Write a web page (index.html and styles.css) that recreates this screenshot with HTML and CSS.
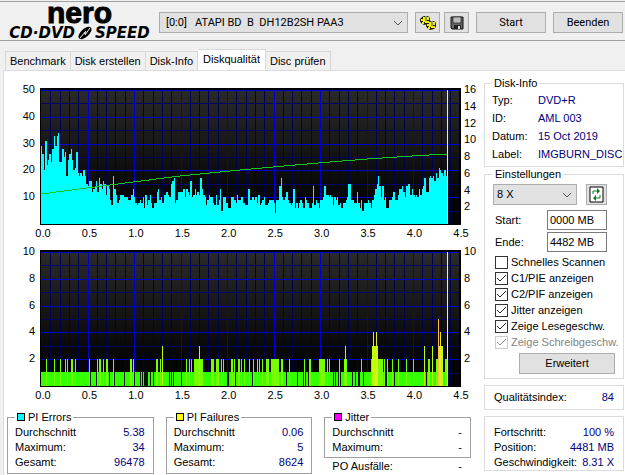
FILE: index.html
```html
<!DOCTYPE html>
<html lang="de">
<head>
  <meta charset="UTF-8">
  <meta name="viewport" content="width=device-width, initial-scale=1">
  <title>Nero CD-DVD Speed</title>
  <link rel="stylesheet" href="styles.css">
</head>
<body>

  <header class="toolbar">
    <div class="logo">
      <div class="logo-top">nero</div>
      <div class="logo-bottom">
        <span>CD·DVD</span>
        <svg width="20" height="14" viewBox="0 0 20 14">
          <ellipse cx="10" cy="7" rx="8" ry="4" transform="rotate(-42 10 7)"/>
          <path d="M5 12L11 5M10 9l5-7" stroke="#f0f0f0" stroke-width="1" fill="none"/>
          <circle cx="10" cy="7" r="1" fill="#f0f0f0"/>
        </svg>
        <span>SPEED</span>
      </div>
    </div>
    <select class="drive" aria-label="Laufwerk">
      <option>[0:0] &nbsp; ATAPI BD &nbsp;B &nbsp;DH12B2SH PAA3</option>
    </select>
    <div class="icons">
      <button class="icon-btn" aria-label="Optionen">
        <svg width="18" height="18" viewBox="0 0 18 18">
          <path d="M1 5l2-2 2-1h4l2 2v4l-2 2-4 1-3-2-1-2z" fill="#222200"/>
          <path d="M7 10l2-2 2-1h4l2 2v4l-2 2-4 1-3-2-1-2z" fill="#222200"/>
          <path d="M2 5h2V3h2v2H4v2H2zM8 3h2v3H8zM3 8h2v2H3zM6 7h4v2H6zM4 5h2v3H4z" fill="#f0f000"/>
          <path d="M8 10h2V8h2v2h-2v2H8zM14 8h2v3h-2zM9 13h2v2H9zM12 12h4v2h-4zM10 10h2v3h-2z" fill="#f0f000"/>
          <path d="M7 2v5M13 7v5" stroke="#fff" stroke-width="1"/>
        </svg>
      </button>
      <button class="icon-btn" aria-label="Speichern">
        <svg width="14" height="14" viewBox="0 0 14 14">
          <path d="M1 1h12v12H2l-1-1z" fill="#666" stroke="#111"/>
          <path d="M3 1h8v6H3z" fill="#ddd" stroke="#333"/>
          <path d="M4 3h6M4 5h6" stroke="#999"/>
          <path d="M4 9h7v4H4z" fill="#222"/>
          <path d="M8 10h2v3H8z" fill="#ddd"/>
        </svg>
      </button>
    </div>
    <button class="btn tool-btn">Start</button>
    <button class="btn tool-btn">Beenden</button>
  </header>

  <nav class="tabs">
    <button>Benchmark</button>
    <button>Disk erstellen</button>
    <button>Disk-Info</button>
    <button class="active">Diskqualität</button>
    <button>Disc prüfen</button>
  </nav>

  <main class="page">
    <div class="left">

      <div class="chart">
        <div class="y-axis"><span>50</span><span>40</span><span>30</span><span>20</span><span>10</span><span></span></div>
        <svg class="plot" id="pie" viewBox="0 0 421 137" preserveAspectRatio="none"></svg>
        <div class="y-axis right-axis"><span>16</span><span>14</span><span>12</span><span>10</span><span>8</span><span>6</span><span>4</span><span>2</span><span></span></div>
        <div class="x-axis"><span>0.0</span><span>0.5</span><span>1.0</span><span>1.5</span><span>2.0</span><span>2.5</span><span>3.0</span><span>3.5</span><span>4.0</span><span>4.5</span></div>
      </div>

      <div class="chart">
        <div class="y-axis"><span>10</span><span>8</span><span>6</span><span>4</span><span>2</span><span></span></div>
        <svg class="plot" id="pif" viewBox="0 0 421 137" preserveAspectRatio="none"></svg>
        <div class="y-axis right-axis"><span>10</span><span>8</span><span>6</span><span>4</span><span>2</span><span></span></div>
        <div class="x-axis"><span>0.0</span><span>0.5</span><span>1.0</span><span>1.5</span><span>2.0</span><span>2.5</span><span>3.0</span><span>3.5</span><span>4.0</span><span>4.5</span></div>
      </div>

      <div class="stats">
        <fieldset class="stat">
          <legend><i class="swatch cyan"></i>PI Errors</legend>
          <div class="row"><span>Durchschnitt</span><b>5.38</b></div>
          <div class="row"><span>Maximum:</span><b>34</b></div>
          <div class="row"><span>Gesamt:</span><b>96478</b></div>
        </fieldset>
        <fieldset class="stat">
          <legend><i class="swatch yellow"></i>PI Failures</legend>
          <div class="row"><span>Durchschnitt</span><b>0.06</b></div>
          <div class="row"><span>Maximum:</span><b>5</b></div>
          <div class="row"><span>Gesamt:</span><b>8624</b></div>
        </fieldset>
        <div class="jitter">
          <fieldset class="stat">
            <legend><i class="swatch magenta"></i>Jitter</legend>
            <div class="row"><span>Durchschnitt</span><b>-</b></div>
            <div class="row"><span>Maximum:</span><b>-</b></div>
          </fieldset>
          <div class="row po"><span>PO Ausfälle:</span><b>-</b></div>
        </div>
      </div>
    </div>

    <aside class="side">
      <fieldset class="info">
        <legend>Disk-Info</legend>
        <dl>
          <dt>Typ:</dt><dd>DVD+R</dd>
          <dt>ID:</dt><dd>AML 003</dd>
          <dt>Datum:</dt><dd>15 Oct 2019</dd>
          <dt>Label:</dt><dd>IMGBURN_DISC</dd>
        </dl>
      </fieldset>

      <fieldset class="settings">
        <legend>Einstellungen</legend>
        <div class="speed">
          <select aria-label="Geschwindigkeit"><option>8 X</option></select>
          <button class="icon-btn refresh" aria-label="Aktualisieren">
            <svg width="15" height="17" viewBox="0 0 15 17">
              <path d="M1 1h13v15H1z" fill="#fff" stroke="#000" stroke-width="1"/>
              <path d="M4 8V5h5M11 9v3H6" fill="none" stroke="#0a7a1a" stroke-width="1"/>
              <path d="M8 2l3 3-3 3zM7 9l-3 3 3 3z" fill="#0a7a1a"/>
            </svg>
          </button>
        </div>
        <div class="field"><label for="start">Start:</label><input type="text" id="start" value="0000 MB"></div>
        <div class="field"><label for="ende">Ende:</label><input type="text" id="ende" value="4482 MB"></div>
        <div class="checks">
          <label><input type="checkbox">Schnelles Scannen</label>
          <label><input type="checkbox" checked>C1/PIE anzeigen</label>
          <label><input type="checkbox" checked>C2/PIF anzeigen</label>
          <label><input type="checkbox" checked>Jitter anzeigen</label>
          <label><input type="checkbox" checked>Zeige Lesegeschw.</label>
          <label class="off"><input type="checkbox" checked disabled>Zeige Schreibgeschw.</label>
        </div>
        <button class="btn more">Erweitert</button>
      </fieldset>

      <div class="box quality">
        <div class="row"><span>Qualitätsindex:</span><b>84</b></div>
      </div>

      <div class="box progress">
        <div class="row"><span>Fortschritt:</span><b>100 %</b></div>
        <div class="row"><span>Position:</span><b>4481 MB</b></div>
        <div class="row"><span>Geschwindigkeit:</span><b>8.31 X</b></div>
      </div>
    </aside>
  </main>

  <script src="script.js"></script>
</body>
</html>
```
FILE: styles.css
```css
* {
  box-sizing: border-box;
}
body {
  margin: 0;
  background: #f0f0f0;
  color: #000;
  font: 11px/15px "Liberation Sans", sans-serif;
}
button, select, input {
  font: inherit;
  color: inherit;
  margin: 0;
}
fieldset {
  margin: 0;
  min-width: 0;
  border: 1px solid #dcdcdc;
}
legend {
  padding: 0 2px;
}
b {
  font-weight: normal;
  color: #000080;
}

/* Toolbar */
.toolbar {
  display: flex;
  align-items: center;
  gap: 7px;
  height: 40px;
  margin-top: 1px;
  padding: 3px 2px 0 7px;
  border-top: 1px solid #a0a0a0;
  border-bottom: 1px solid #a0a0a0;
  font: 11px/15px Roboto, sans-serif;
}
.logo {
  width: 145px;
  text-align: center;
}
.logo-top {
  font: bold 30px/14px "Liberation Sans", sans-serif;
  -webkit-text-stroke: 1px #000;
}
.logo-bottom {
  display: flex;
  align-items: center;
  justify-content: center;
  margin-top: 6px;
  font: italic bold 15px/14px "DejaVu Sans", sans-serif;
}
select {
  appearance: none;
  height: 21px;
  padding: 0 6px;
  border: 1px solid #adadad;
  border-radius: 0;
  background: #e1e1e1 url("data:image/svg+xml,%3Csvg xmlns='http://www.w3.org/2000/svg' width='10' height='6'%3E%3Cpath d='M1 1l4 4 4-4' fill='none' stroke='%23555'/%3E%3C/svg%3E") no-repeat right 4px center;
}
.drive {
  flex: 1;
  min-width: 0;
}
.icons {
  display: flex;
  gap: 4px;
}
.btn, .icon-btn {
  height: 21px;
  padding: 0;
  border: 1px solid #adadad;
  background: #e1e1e1;
}
.icon-btn {
  display: flex;
  align-items: center;
  justify-content: center;
  width: 25px;
}
.tool-btn {
  width: 70px;
}

/* Tabs */
.tabs {
  display: flex;
  align-items: flex-end;
  height: 29px;
  padding-left: 5px;
}
.tabs button {
  height: 19px;
  padding: 0 4px;
  border: 1px solid #d9d9d9;
  border-bottom: none;
  border-left-width: 0;
  background: #f0f0f0;
}
.tabs button:first-child {
  border-left-width: 1px;
}
.tabs .active {
  height: 21px;
  padding: 0 5px 2px;
  background: #fff;
}

/* Page */
.page {
  display: flex;
  gap: 13px;
  margin-left: 3px;
  padding: 8px 1px 0 3px;
  min-height: calc(100vh - 70px);
  border-top: 1px solid #dcdcdc;
  border-left: 1px solid #dcdcdc;
  background: #fff;
}
.left {
  flex: 1;
  min-width: 0;
  padding-top: 9px;
}

/* Charts */
.chart {
  display: grid;
  grid-template-columns: 28px 1fr 5px;
  grid-template-rows: 137px 25px;
  column-gap: 5px;
}
.plot {
  display: block;
  width: 100%;
  height: 137px;
}
.y-axis {
  display: flex;
  flex-direction: column;
  justify-content: space-between;
  height: 149px;
  margin-top: -6px;
  text-align: right;
}
.y-axis span {
  height: 15px;
}
.right-axis {
  text-align: left;
  margin-left: -2px;
}
.x-axis {
  grid-column: 2;
  display: flex;
  justify-content: space-between;
  margin: 1px -10px 0 -7px;
}
.x-axis span {
  width: 20px;
  text-align: center;
}

/* Stats */
.stats {
  display: grid;
  grid-template-columns: repeat(3, 1fr);
  gap: 12px;
  margin-top: -2px;
}
.stat {
  padding: 0 8px 2px 7px;
  border-color: #a0a0a0;
}
.swatch {
  display: inline-block;
  width: 8px;
  height: 8px;
  margin-right: 3px;
  border: 1px solid #000;
}
.cyan {
  background: #00ffff;
}
.yellow {
  background: #ffff00;
}
.magenta {
  background: #ff00ff;
}
.row {
  display: flex;
  justify-content: space-between;
}
.po {
  padding: 1px 9px 0 8px;
}

/* Right column */
.side {
  width: 140px;
  margin-top: -3px;
}
.info {
  height: 91px;
  padding: 0 0 0 7px;
}
dl {
  display: grid;
  grid-template-columns: 46px 1fr;
  margin: 0;
  line-height: 18px;
  white-space: nowrap;
}
dd {
  margin: 0;
  color: #000080;
}
.settings {
  padding: 2px 8px 4px;
}
.speed {
  display: flex;
  gap: 9px;
  margin-bottom: 5px;
}
.speed select {
  width: 84px;
  padding: 0 3px;
}
.refresh {
  width: 21px;
}
.field {
  display: flex;
  justify-content: space-between;
  align-items: center;
  margin: 0 8px 2px 2px;
}
.field input {
  width: 60px;
  height: 20px;
  padding: 0 2px;
  border: 1px solid #7a7a7a;
}
.checks {
  padding-left: 2px;
}
.checks label {
  display: flex;
  align-items: center;
  gap: 3px;
  height: 16px;
  white-space: nowrap;
}
.checks input {
  appearance: none;
  flex: none;
  width: 13px;
  height: 13px;
  border: 1px solid #333;
  background: #fff;
}
.checks input:checked {
  background: #fff url("data:image/svg+xml,%3Csvg xmlns='http://www.w3.org/2000/svg' width='11' height='11'%3E%3Cpath d='M1 5l3 3 6-6' fill='none' stroke='%23222'/%3E%3C/svg%3E") no-repeat center;
}
.checks .off {
  color: #838383;
}
.checks .off input {
  border-color: #999;
  opacity: 0.5;
}
.more {
  display: block;
  width: 96px;
  margin: 3px 0 0 auto;
}
.box {
  margin-top: 6px;
  border: 1px solid #dcdcdc;
  padding: 4px 9px;
}
.progress {
  padding: 8px 9px 0;
}
```
FILE: script.js
```js
const SVG = "http://www.w3.org/2000/svg";
const LEFT = 1, TOP = 2, BOTTOM = 136, END = 407;

// PI errors, one value per sample
const errors = [
  29,26,20,31,22,24,26,23,28,33,29,33,34,23,23,28,25,27,18,24,26,28,24,20,21,27,19,18,19,18,20,18,
  15,14,16,16,12,13,14,16,12,17,15,13,16,15,11,14,13,9,7,18,13,11,8,9,11,11,11,10,10,10,9,9,11,13,
  10,8,7,8,9,8,10,6,11,7,9,11,8,6,8,8,12,13,9,10,8,11,11,12,11,10,15,16,17,8,9,12,12,12,12,13,10,
  13,12,11,16,10,11,13,11,12,11,17,13,11,10,7,9,11,10,10,8,7,11,7,9,13,5,10,10,8,8,6,6,10,10,9,8,
  11,9,9,10,8,8,7,7,13,9,9,10,9,10,8,11,7,8,9,10,7,7,8,9,9,9,8,4,9,9,14,17,10,9,10,12,9,8,7,8,13,
  6,8,6,8,9,8,6,10,9,8,6,6,8,14,7,9,8,6,9,9,10,14,11,11,10,11,10,7,10,9,10,7,8,6,8,8,9,10,15,15,
  9,9,8,8,12,8,6,9,5,8,8,8,9,8,6,9,11,13,15,18,14,10,14,9,10,6,6,9,9,10,12,9,9,11,13,13,14,12,10,
  14,15,15,11,13,11,10,11,10,13,11,13,14,17,12,12,17,18,17,18,16,19,17,21,20,19,18,20,18
];

// PI failures: [x, width, value], everything else is 1
const failures = [
  [6,1,2],[14,1,2],[20,1,2],[25,1,2],[27,1,2],[31,2,2],[35,1,2],[49,1,2],[57,1,2],[59,2,2],[63,1,2],
  [66,2,2],[73,1,2],[90,2,2],[93,1,2],[116,2,2],[120,1,2],[122,1,3],[146,1,2],[149,1,2],[151,1,2],
  [154,9,2],[159,1,3],[171,3,2],[176,3,2],[181,1,2],[183,1,2],[191,2,2],[194,1,2],[198,1,2],
  [199,1,2],[201,1,2],[204,1,2],[209,1,2],[213,1,2],[217,1,2],[219,1,2],[222,1,2],[226,3,2],
  [231,8,2],[241,2,2],[249,1,2],[264,1,2],[269,2,2],[279,6,2],[287,1,2],[289,1,2],[299,1,2],
  [304,3,2],[305,1,3],[321,1,2],[331,1,2],[332,6,3],[333,1,4],[336,1,4],[338,5,2],[344,1,2],
  [347,1,2],[352,1,2],[358,1,2],[366,1,2],[373,1,2],[384,1,3],[388,2,2],[392,1,3],[396,2,2],
  [398,5,3],[398,1,5],[400,1,4],[405,2,2]
];
const gaps = [
  [50,1],[56,1],[69,1],[74,1],[84,1],[94,1],[100,1],[102,1],[104,4],[110,1],[113,1],[129,1],[131,1],
  [133,1],[141,1],[146,1],[187,2],[195,1],[212,2],[246,1],[257,1],[263,1],[265,1],[268,1],[293,1],
  [295,1],[298,1],[300,1],[312,1],[315,1],[318,2],[323,1],[345,2],[352,1],[354,1],[386,1]
];
const colors = ["#000", "#33ff00", "#77ff00", "#bbff00", "#ddee22", "#ffbb44"];

function add(svg, name, attrs) {
  const el = document.createElementNS(SVG, name);
  for (const key in attrs) el.setAttribute(key, attrs[key]);
  svg.appendChild(el);
  return el;
}

function rect(svg, x, y, width, height, fill) {
  add(svg, "rect", { x, y, width, height, fill, "shape-rendering": "crispEdges" });
}

function drawGrid(svg) {
  const grad = add(svg, "linearGradient", { id: svg.id + "-bg", x1: 0, y1: 0, x2: 0, y2: 1 });
  add(grad, "stop", { offset: 0, "stop-color": "#2a2a2a" });
  add(grad, "stop", { offset: 0.8, "stop-color": "#050505" });
  rect(svg, 0, 0, 421, 137, "#000");
  rect(svg, 1, 2, 418, 134, "url(#" + svg.id + "-bg)");
  for (let i = 1; i < 45; i++) {
    if (i % 5) rect(svg, Math.round(LEFT + i * 9.3), TOP, 1, 134, "#00004c");
  }
  for (let i = 0; i < 10; i++) {
    rect(svg, LEFT, Math.round(TOP + i * 13.4), 418, 1, i % 2 ? "#000066" : "#0000cc");
  }
  for (let i = 5; i < 45; i += 5) {
    rect(svg, Math.round(LEFT + i * 9.3), TOP, 1, 134, "#0000cc");
  }
}

const pie = document.getElementById("pie");
drawGrid(pie);
const step = (END - LEFT) / errors.length;
errors.forEach((v, i) => {
  const x = Math.round(LEFT + i * step);
  const next = Math.round(LEFT + (i + 1) * step);
  const h = Math.round(v * 2.68);
  rect(pie, x, BOTTOM - h, next - x, h, "#00ffff");
});
rect(pie, END, TOP, 1, 134, "#e8e8e8");
add(pie, "polyline", {
  points: "1,106 47,100 93,94 140,88 200,82 233,79 278,75 327,71 372,68 407,66",
  fill: "none", stroke: "#10c820", "stroke-width": 1, "shape-rendering": "crispEdges"
});

const pif = document.getElementById("pif");
drawGrid(pif);
rect(pif, LEFT, BOTTOM - 14, END - LEFT, 14, colors[1]);
gaps.forEach(([x, w]) => rect(pif, x, BOTTOM - 14, w, 14, "#001a00"));
failures.forEach(([x, w, v]) => {
  const h = Math.round(v * 13.4);
  rect(pif, x, BOTTOM - h, w, h, colors[v]);
});
rect(pif, END, TOP, 1, 134, "#e8e8e8");
```
